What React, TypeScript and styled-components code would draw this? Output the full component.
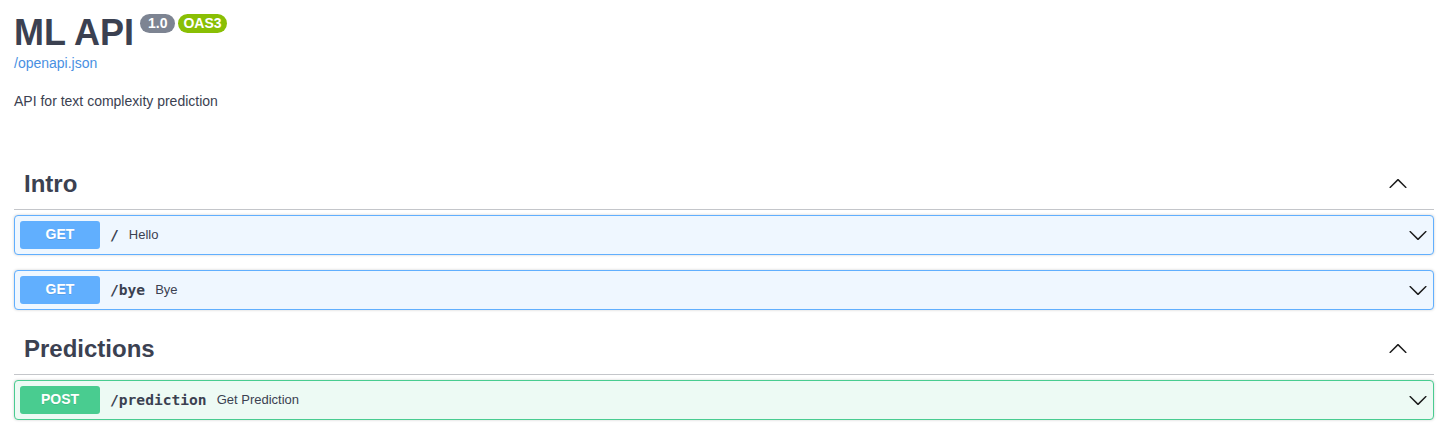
import React from "react";
import styled, { createGlobalStyle } from "styled-components";

const GlobalStyle = createGlobalStyle`
  html, body { margin: 0; padding: 0; background: #fff; }
  body { font-family: "Liberation Sans", Arial, sans-serif; color: #3b4151; }
`;

const Wrapper = styled.div`
  padding: 0 7px 0 14px;
`;

const Info = styled.div`
  padding-top: 12px;
  margin-bottom: 51px;
`;

const TitleRow = styled.div`
  display: flex;
  align-items: flex-start;
`;

const Title = styled.h2`
  margin: 0;
  font-size: 36px;
  line-height: 41px;
  font-weight: 700;
  color: #3b4151;
`;

const Badge = styled.span<{ $bg: string; $px: number; $ml: number }>`
  display: inline-block;
  margin-top: 2px;
  margin-left: ${(p) => p.$ml}px;
  padding: 1px ${(p) => p.$px}px 2px;
  border-radius: 57px;
  background: ${(p) => p.$bg};
  color: #fff;
  font-size: 14px;
  line-height: 16px;
  font-weight: 700;
`;

const SpecLink = styled.a`
  display: block;
  margin-top: 2px;
  font-size: 14px;
  line-height: 16px;
  color: #4990e2;
  text-decoration: none;
`;

const Description = styled.p`
  margin: 22px 0 0;
  font-size: 14px;
  line-height: 16px;
  color: #3b4151;
`;

const TagSection = styled.section``;

const TagHeader = styled.h3`
  display: flex;
  align-items: center;
  margin: 0 0 5px;
  padding: 9px 26px 11px 10px;
  border-bottom: 1px solid rgba(59, 65, 81, 0.3);
  font-size: 24px;
  line-height: 29px;
  font-weight: 700;
  color: #3b4151;
`;

const TagName = styled.span`
  flex: 1;
`;

const Opblock = styled.div<{ $color: string; $bg: string }>`
  margin: 0 0 15px;
  border: 1px solid ${(p) => p.$color};
  background: ${(p) => p.$bg};
  border-radius: 4px;
  box-shadow: 0 0 3px rgba(0, 0, 0, 0.19);
`;

const Summary = styled.div`
  display: flex;
  align-items: center;
  padding: 5px;
`;

const Method = styled.span<{ $color: string }>`
  min-width: 80px;
  padding: 5px 0 7px;
  border-radius: 3px;
  background: ${(p) => p.$color};
  color: #fff;
  font-size: 14px;
  line-height: 16px;
  font-weight: 700;
  text-align: center;
  text-shadow: 0 1px 0 rgba(0, 0, 0, 0.1);
`;

const Path = styled.span`
  padding: 0 10px 2px;
  font-family: "DejaVu Sans Mono", "Liberation Mono", monospace;
  font-size: 14.6px;
  font-weight: 700;
  color: #3b4151;
`;

const SummaryText = styled.span`
  flex: 1;
  padding-bottom: 2px;
  font-size: 13px;
  color: #3b4151;
`;

const ArrowSvg = styled.svg<{ $up?: boolean }>`
  width: 20px;
  height: 20px;
  flex: none;
  fill: #1b1b1b;
  transform: ${(p) => (p.$up ? "rotate(180deg)" : "none")};
`;

const Arrow = ({ up }: { up?: boolean }) => (
  <ArrowSvg $up={up} viewBox="0 0 20 20" aria-hidden="true">
    <path d="M17.418 6.109c.272-.268.709-.268.979 0s.271.701 0 .969l-7.908 7.83c-.27.268-.707.268-.979 0l-7.908-7.830c-.27-.268-.27-.701 0-.969.271-.268.709-.268.979 0L10 13.25l7.418-7.141z" />
  </ArrowSvg>
);

const METHODS: Record<string, { color: string; bg: string }> = {
  GET: { color: "#61affe", bg: "#eff7ff" },
  POST: { color: "#49cc90", bg: "#edfaf4" },
};

type Op = { method: string; path: string; summary: string };

const tags: { name: string; ops: Op[] }[] = [
  {
    name: "Intro",
    ops: [
      { method: "GET", path: "/", summary: "Hello" },
      { method: "GET", path: "/bye", summary: "Bye" },
    ],
  },
  {
    name: "Predictions",
    ops: [{ method: "POST", path: "/prediction", summary: "Get Prediction" }],
  },
];

export default function App() {
  return (
    <>
      <GlobalStyle />
      <Wrapper>
        <Info>
          <TitleRow>
            <Title>ML API</Title>
            <Badge $bg="#7d8492" $px={8} $ml={6}>1.0</Badge>
            <Badge $bg="#89bf04" $px={5} $ml={3}>OAS3</Badge>
          </TitleRow>
          <SpecLink href="#">/openapi.json</SpecLink>
          <Description>API for text complexity prediction</Description>
        </Info>
        {tags.map((t) => (
          <TagSection key={t.name}>
            <TagHeader>
              <TagName>{t.name}</TagName>
              <Arrow up />
            </TagHeader>
            {t.ops.map((op) => {
              const m = METHODS[op.method];
              return (
                <Opblock key={op.path} $color={m.color} $bg={m.bg}>
                  <Summary>
                    <Method $color={m.color}>{op.method}</Method>
                    <Path>{op.path}</Path>
                    <SummaryText>{op.summary}</SummaryText>
                    <Arrow />
                  </Summary>
                </Opblock>
              );
            })}
          </TagSection>
        ))}
      </Wrapper>
    </>
  );
}
